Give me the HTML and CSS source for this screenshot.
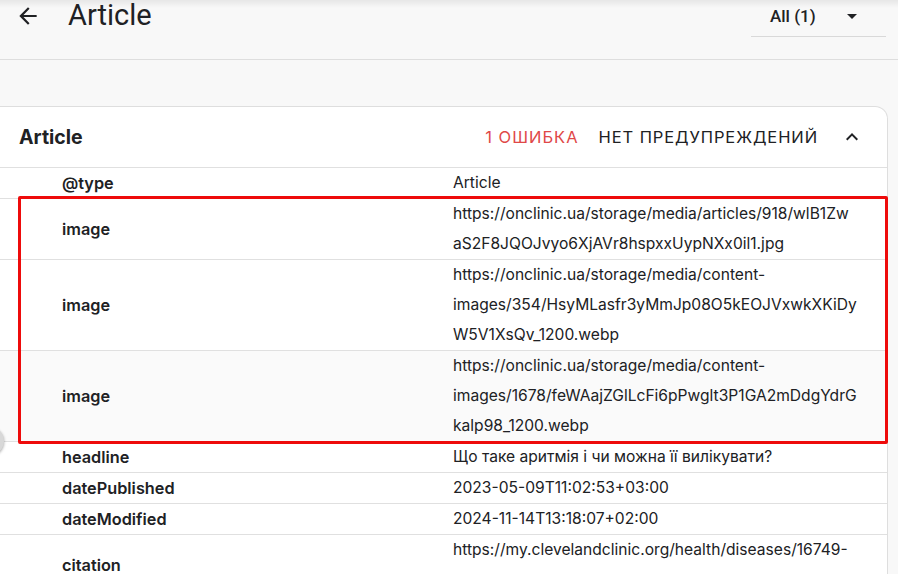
FILE: index.html
```html
<!DOCTYPE html>
<html lang="ru">
<head>
<meta charset="utf-8">
<title>Article</title>
<link rel="stylesheet" href="styles.css">
</head>
<body>
<div class="page">
  <header class="topbar">
    <div class="topbar-row">
      <button class="back" aria-label="Назад">
        <svg width="26" height="26" viewBox="0 0 24 24"><path d="M20 11H7.83l5.59-5.59L12 4l-8 8 8 8 1.41-1.41L7.83 13H20v-2z" fill="#202124"/></svg>
      </button>
      <h1 class="title">Article</h1>
      <div class="select">
        <span class="select-label">All (1)</span>
        <svg class="select-arrow" width="24" height="24" viewBox="0 0 24 24"><path d="M7 10l5 5 5-5z" fill="#202124"/></svg>
      </div>
    </div>
  </header>

  <section class="card">
    <div class="card-head">
      <h2 class="card-title">Article</h2>
      <span class="errors">1 ошибка</span>
      <span class="warnings">Нет предупреждений</span>
      <svg class="caret" width="24" height="24" viewBox="0 0 24 24"><path d="M7.41 15.41L12 10.83l4.59 4.58L18 14l-6-6-6 6z" fill="#202124"/></svg>
    </div>
    <div class="rows">
      <div class="row"><div class="key">@type</div><div class="val">Article</div></div>
      <div class="row"><div class="key">image</div><div class="val">https://onclinic.ua/storage/media/articles/918/wlB1Zw<br>aS2F8JQOJvyo6XjAVr8hspxxUypNXx0il1.jpg</div></div>
      <div class="row"><div class="key">image</div><div class="val">https://onclinic.ua/storage/media/content-<br>images/354/HsyMLasfr3yMmJp08O5kEOJVxwkXKiDy<br>W5V1XsQv_1200.webp</div></div>
      <div class="row hover"><div class="key">image</div><div class="val">https://onclinic.ua/storage/media/content-<br>images/1678/feWAajZGlLcFi6pPwglt3P1GA2mDdgYdrG<br>kalp98_1200.webp</div></div>
      <div class="row"><div class="key">headline</div><div class="val">Що таке аритмія і чи можна її вилікувати?</div></div>
      <div class="row"><div class="key">datePublished</div><div class="val">2023-05-09T11:02:53+03:00</div></div>
      <div class="row"><div class="key">dateModified</div><div class="val">2024-11-14T13:18:07+02:00</div></div>
      <div class="row tall"><div class="key">citation</div><div class="val top">https://my.clevelandclinic.org/health/diseases/16749-</div></div>
    </div>
  </section>

  <div class="highlight"></div>
  <div class="fab-edge"></div>
</div>
</body>
</html>
```

FILE: styles.css
```css
html, body {
  margin: 0;
  padding: 0;
}
body {
  background: #f8f8f8;
  color: #202124;
  font-family: Inter, "Noto Sans", sans-serif;
  overflow: hidden;
}
.page {
  position: relative;
  width: 898px;
  height: 574px;
  overflow: hidden;
}
.page::before {
  content: "";
  position: absolute;
  left: 0;
  right: 0;
  top: 0;
  height: 8px;
  background: linear-gradient(rgba(0,0,0,0.07), rgba(0,0,0,0));
  pointer-events: none;
}
.topbar {
  height: 60px;
  box-sizing: border-box;
  border-bottom: 1px solid #dedede;
}
.topbar-row {
  display: flex;
  align-items: center;
  height: 32px;
  padding-left: 15px;
  padding-right: 12px;
}
.back {
  width: 26px;
  height: 26px;
  padding: 0;
  margin: 0;
  border: 0;
  background: none;
  display: flex;
}
.title {
  margin: 0 0 0 27px;
  font-family: Roboto, "Noto Sans", sans-serif;
  font-weight: 400;
  font-size: 29px;
  line-height: 32px;
  position: relative;
  top: -1px;
  color: #202124;
}
.select {
  margin-left: auto;
  width: 135px;
  height: 37px;
  box-sizing: border-box;
  border-bottom: 1px solid #d9d9d9;
  display: flex;
  align-items: center;
  padding-left: 19px;
  padding-bottom: 4px;
  align-self: flex-start;
}
.select-label {
  font-family: Roboto, "Noto Sans", sans-serif;
  font-weight: 500;
  font-size: 17px;
  color: #202124;
}
.select-arrow {
  margin-left: auto;
  margin-right: 22px;
}
.card {
  margin-top: 46px;
  width: 887px;
  background: #fff;
  border: 1px solid #dedede;
  border-left: 0;
  border-radius: 0 13px 0 0;
}
.card-head {
  display: flex;
  align-items: center;
  height: 60px;
  padding-left: 19px;
  padding-right: 23px;
}
.card-title {
  margin: 0;
  font-size: 19.5px;
  font-weight: 700;
  color: #202124;
}
.errors {
  margin-left: auto;
  color: #e04848;
  font-size: 16.5px;
  text-transform: uppercase;
  letter-spacing: 1px;
}
.warnings {
  margin-left: 20px;
  font-size: 16.5px;
  text-transform: uppercase;
  letter-spacing: 0.9px;
  color: #202124;
}
.caret {
  margin-left: 22px;
}
.row {
  display: grid;
  grid-template-columns: 391px 1fr;
  padding-left: 62px;
  border-top: 1px solid #e0e0e0;
  align-items: center;
}
.row.hover {
  background: #fafafa;
}
.row.tall {
  min-height: 60px;
}
.key {
  font-size: 16.3px;
  font-weight: 600;
  color: #202124;
}
.val {
  font-size: 15.6px;
  line-height: 30px;
  color: #202124;
  white-space: nowrap;
}
.val.top {
  align-self: start;
}
.highlight {
  position: absolute;
  left: 18px;
  top: 196px;
  width: 870px;
  height: 248px;
  box-sizing: border-box;
  border: 3px solid #ee0b0b;
  border-radius: 2px;
  pointer-events: none;
}
.fab-edge {
  position: absolute;
  left: -24px;
  top: 427px;
  width: 28px;
  height: 28px;
  border-radius: 50%;
  background: #d8d8d8;
  box-shadow: 0 1px 3px rgba(0,0,0,0.35);
}
```
